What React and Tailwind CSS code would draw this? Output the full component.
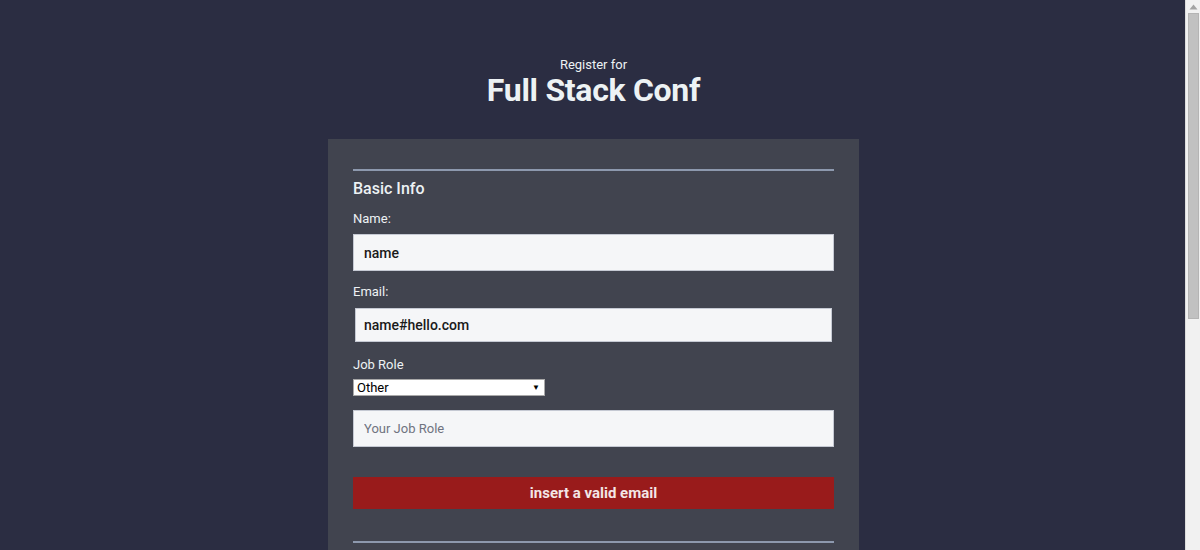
import React from "react";

function Scrollbar() {
  return (
    <aside className="flex h-[550px] w-[15px] shrink-0 flex-col items-center border-l border-[#dcdcdc] bg-[#f1f1f1]">
      <svg width="9" height="6" viewBox="0 0 9 6" className="mt-[4px]">
        <path d="M4.5 0.5 L8.5 5.5 L0.5 5.5 Z" fill="#a3a3a3" />
      </svg>
      <div className="mt-[3px] h-[306px] w-[11px] border border-[#b4b4b4] bg-[#c1c1c1]" />
    </aside>
  );
}

export default function App() {
  return (
    <div className="flex h-[550px] overflow-hidden bg-[#2b2d42] font-['Roboto',sans-serif] text-[#edf2f4]">
      <main className="h-[550px] flex-1 overflow-hidden pl-[2px]">
        {/* Header */}
        <header className="pt-[57px] pb-[31px] text-center">
          <p className="text-[13px] leading-[16px]">Register for</p>
          <h1 className="-mt-[1px] text-[32px] font-bold leading-[36px] tracking-[-0.3px]">
            Full Stack Conf
          </h1>
        </header>

        {/* Form card */}
        <form className="mx-auto w-[531px] bg-[#41444f] px-[25px] pt-[30px] pb-[40px]">
          <fieldset className="border-t-2 border-[#8d99ae] pt-[8px]">
            <h2 className="text-[16px] font-medium leading-[20px]">Basic Info</h2>

            <label className="mt-[12px] block text-[13px] leading-[16px]">Name:</label>
            <input
              type="text"
              defaultValue="name"
              className="mt-[7px] block h-[37px] w-full border border-[#c5c9d3] bg-[#f5f6f8] px-[10px] text-[14px] font-medium text-[#1a1a1a] outline-none"
            />

            <label className="mt-[13px] block text-[13px] leading-[16px]">Email:</label>
            <div className="mt-[8px] px-[2px]">
              <input
                type="text"
                defaultValue="name#hello.com"
                className="block h-[34px] w-full border border-[#c5c9d3] bg-[#f5f6f8] px-[8px] text-[14px] font-medium text-[#1a1a1a] outline-none"
              />
            </div>

            <label className="mt-[15px] block text-[13px] leading-[16px]">Job Role</label>
            <div className="relative mt-[6px] h-[17px] w-[192px] border border-[#a9a9a9] bg-white">
              <span className="absolute left-[3px] top-0 text-[13px] leading-[15px] text-black">Other</span>
              <span className="absolute right-[4px] top-[1px] text-[8px] leading-[13px] text-black">▼</span>
            </div>

            <input
              type="text"
              placeholder="Your Job Role"
              className="mt-[14px] block h-[37px] w-full border border-[#c5c9d3] bg-[#f5f6f8] px-[10px] text-[13px] text-[#1a1a1a] outline-none placeholder:text-[#6f7380]"
            />

            <button
              type="button"
              className="mt-[30px] block h-[32px] w-full bg-[#991b1b] text-[15px] font-bold text-[#f3e6e6]"
            >
              insert a valid email
            </button>
          </fieldset>

          <div className="mt-[32px] border-t-2 border-[#8d99ae]" />
        </form>
      </main>
      <Scrollbar />
    </div>
  );
}
